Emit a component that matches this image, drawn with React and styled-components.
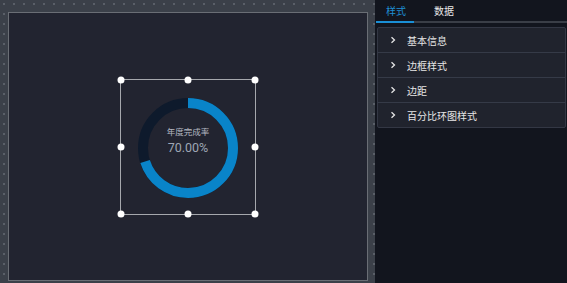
import styled, { createGlobalStyle } from 'styled-components';

const GlobalStyle = createGlobalStyle`
  html, body {
    margin: 0;
    padding: 0;
    background: #12151e;
  }
  body {
    font-family: "Noto Sans CJK SC", "Noto Sans", sans-serif;
  }
`;

const Page = styled.div`
  display: flex;
  width: 567px;
  height: 283px;
  overflow: hidden;
`;

// Canvas area with dotted grid
const Canvas = styled.div`
  width: 375px;
  flex-shrink: 0;
  box-sizing: border-box;
  padding: 12px 7px 2px 8px;
  background-color: #3b4049;
  background-image: radial-gradient(circle, #5a5f68 0.8px, transparent 1.2px);
  background-size: 10px 10px;
  background-position: -1px -1px;
`;

const Screen = styled.div`
  position: relative;
  height: 100%;
  box-sizing: border-box;
  border: 1.5px solid #6a6e75;
  background: #222430;
`;

const SelectBox = styled.div`
  position: absolute;
  left: 111px;
  top: 66px;
  width: 136px;
  height: 136px;
  box-sizing: border-box;
  border: 1px solid #a6a8ad;
  display: flex;
  align-items: center;
  justify-content: center;
`;

const Handle = styled.span`
  position: absolute;
  width: 7px;
  height: 7px;
  border-radius: 50%;
  background: #ffffff;
  left: ${(p) => p.$x}%;
  top: ${(p) => p.$y}%;
  transform: translate(-50%, -50%);
`;

const Donut = styled.div`
  position: relative;
  width: 100px;
  height: 100px;
  margin-top: 1px;
`;

const DonutLabel = styled.div`
  position: absolute;
  inset: 0;
  display: flex;
  flex-direction: column;
  align-items: center;
  justify-content: center;
  padding-bottom: 14px;
  box-sizing: border-box;
`;

const Title = styled.div`
  font-size: 8.5px;
  color: #b4b8c0;
  line-height: 12px;
`;

const Value = styled.div`
  font-family: "Roboto", "Noto Sans", sans-serif;
  font-size: 12.5px;
  color: #9ea6b4;
  line-height: 16px;
  margin-top: 3px;
`;

// Right property panel
const Panel = styled.div`
  flex: 1;
  background: #12151e;
  display: flex;
  flex-direction: column;
`;

const Tabs = styled.div`
  display: flex;
  height: 21px;
  border-bottom: 2px solid #3a3e47;
  margin-left: 1px;
`;

const Tab = styled.div`
  width: ${(p) => (p.$active ? '38px' : 'auto')};
  padding-left: ${(p) => (p.$active ? '10px' : '20px')};
  box-sizing: border-box;
  font-size: 10px;
  line-height: 21px;
  color: ${(p) => (p.$active ? '#1f8fd4' : '#e8e8e8')};
  box-shadow: ${(p) => (p.$active ? 'inset 0 -2px 0 #1a8fd6' : 'none')};
  margin-bottom: -2px;
  height: 23px;
`;

const List = styled.div`
  margin: 4px 1px 0 2px;
  border: 1px solid #333744;
  border-radius: 2px;
  background: #20232d;
`;

const Row = styled.div`
  display: flex;
  align-items: center;
  height: 24px;
  border-top: ${(p) => (p.$first ? 'none' : '1px solid #353a47')};
  font-size: 10px;
  color: #e6e6e6;
`;

const Arrow = styled.svg`
  width: 8px;
  height: 8px;
  margin: 0 10px 0 11px;
`;

const sections = ['基本信息', '边框样式', '边距', '百分比环图样式'];

const handles = [
  [0, 0], [50, 0], [100, 0],
  [0, 50], [100, 50],
  [0, 100], [50, 100], [100, 100],
];

function Ring({ percent }) {
  const r = 45;
  const c = 2 * Math.PI * r;
  return (
    <svg width="100" height="100" viewBox="0 0 100 100">
      <circle cx="50" cy="50" r={r} fill="none" stroke="#0e1a2c" strokeWidth="10" />
      <circle
        cx="50"
        cy="50"
        r={r}
        fill="none"
        stroke="#0984c9"
        strokeWidth="10"
        strokeDasharray={`${(c * percent) / 100} ${c}`}
        transform="rotate(-90 50 50)"
      />
    </svg>
  );
}

export default function App() {
  return (
    <>
      <GlobalStyle />
      <Page>
        <Canvas>
          <Screen>
            <SelectBox>
              {handles.map(([x, y]) => (
                <Handle key={`${x}-${y}`} $x={x} $y={y} />
              ))}
              <Donut>
                <Ring percent={70} />
                <DonutLabel>
                  <Title>年度完成率</Title>
                  <Value>70.00%</Value>
                </DonutLabel>
              </Donut>
            </SelectBox>
          </Screen>
        </Canvas>
        <Panel>
          <Tabs>
            <Tab $active>样式</Tab>
            <Tab>数据</Tab>
          </Tabs>
          <List>
            {sections.map((s, i) => (
              <Row key={s} $first={i === 0}>
                <Arrow viewBox="0 0 8 8">
                  <path d="M2.5 1.2 L5.5 4 L2.5 6.8" fill="none" stroke="#e6e6e6" strokeWidth="1.3" />
                </Arrow>
                {s}
              </Row>
            ))}
          </List>
        </Panel>
      </Page>
    </>
  );
}
